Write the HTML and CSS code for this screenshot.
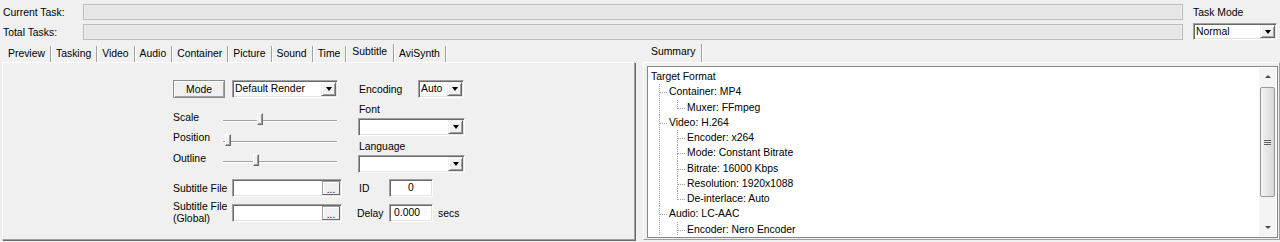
FILE: index.html
```html
<!DOCTYPE html>
<html>
<head>
  <title>Encoder Queue</title>
  <link rel="stylesheet" href="styles.css">
</head>
<body>
  <div class="status">
    <div class="status-bars">
      <div class="status-row">
        <span class="status-label">Current Task:</span>
        <div class="progress"></div>
      </div>
      <div class="status-row">
        <span class="status-label">Total Tasks:</span>
        <div class="progress"></div>
      </div>
    </div>
    <div class="task-mode">
      <span class="task-mode-label">Task Mode</span>
      <div class="combo combo-mode"><span class="combo-text">Normal</span><span class="drop"></span></div>
    </div>
  </div>

  <div class="main">
    <div class="left">
      <div class="tabs">
        <span class="tab">Preview</span>
        <span class="tab">Tasking</span>
        <span class="tab">Video</span>
        <span class="tab">Audio</span>
        <span class="tab">Container</span>
        <span class="tab">Picture</span>
        <span class="tab">Sound</span>
        <span class="tab">Time</span>
        <span class="tab active">Subtitle</span>
        <span class="tab">AviSynth</span>
      </div>
      <div class="panel">
        <div class="form">
          <div class="col col-a">
            <div class="row row-mode">
              <span class="btn btn-mode">Mode</span>
              <div class="combo combo-render"><span class="combo-text">Default Render</span><span class="drop"></span></div>
            </div>
            <div class="row slider-row">
              <span class="slider-label">Scale</span>
              <div class="slider"><div class="track"></div><div class="thumb" style="left: 34px"></div></div>
            </div>
            <div class="row slider-row">
              <span class="slider-label">Position</span>
              <div class="slider"><div class="track"></div><div class="thumb" style="left: 2px"></div></div>
            </div>
            <div class="row slider-row">
              <span class="slider-label">Outline</span>
              <div class="slider"><div class="track"></div><div class="thumb" style="left: 30px"></div></div>
            </div>
            <div class="row file-row first-file">
              <span class="file-label">Subtitle File</span>
              <div class="input file-input"><span class="input-text"></span><span class="browse">...</span></div>
            </div>
            <div class="row file-row">
              <span class="file-label two-line">Subtitle File<br>(Global)</span>
              <div class="input file-input"><span class="input-text"></span><span class="browse">...</span></div>
            </div>
          </div>

          <div class="col col-b">
            <div class="row row-encoding">
              <span class="enc-label">Encoding</span>
              <div class="combo combo-auto"><span class="combo-text">Auto</span><span class="drop"></span></div>
            </div>
            <span class="field-label label-font">Font</span>
            <div class="combo combo-wide"><span class="combo-text"></span><span class="drop"></span></div>
            <span class="field-label label-lang">Language</span>
            <div class="combo combo-wide"><span class="combo-text"></span><span class="drop"></span></div>
            <div class="row num-row row-id">
              <span class="num-label id-label">ID</span>
              <div class="input num-input centered">0</div>
            </div>
            <div class="row num-row">
              <span class="num-label">Delay</span>
              <div class="input num-input">0.000</div>
              <span class="unit">secs</span>
            </div>
          </div>
        </div>
      </div>
    </div>

    <div class="right">
      <div class="tabs tabs-right">
        <span class="tab active">Summary</span>
      </div>
      <div class="page">
        <div class="tree-box">
          <div class="tree-scroll">
            <ul class="tree">
              <li><span class="node">Target Format</span>
                <ul>
                  <li><span class="node">Container: MP4</span>
                    <ul>
                      <li><span class="node">Muxer: FFmpeg</span></li>
                    </ul>
                  </li>
                  <li><span class="node">Video: H.264</span>
                    <ul>
                      <li><span class="node">Encoder: x264</span></li>
                      <li><span class="node">Mode: Constant Bitrate</span></li>
                      <li><span class="node">Bitrate: 16000 Kbps</span></li>
                      <li><span class="node">Resolution: 1920x1088</span></li>
                      <li><span class="node">De-interlace: Auto</span></li>
                    </ul>
                  </li>
                  <!-- list continues below the visible area -->
                  <li class="cont"><span class="node">Audio: LC-AAC</span>
                    <ul>
                      <li class="cont"><span class="node">Encoder: Nero Encoder</span></li>
                    </ul>
                  </li>
                </ul>
              </li>
            </ul>
          </div>
          <div class="scrollbar">
            <div class="sb-btn sb-up"></div>
            <div class="sb-track">
              <div class="sb-thumb"><span></span><span></span><span></span></div>
            </div>
            <div class="sb-btn sb-down"></div>
          </div>
        </div>
      </div>
    </div>
  </div>
</body>
</html>
```

FILE: styles.css
```css
* {
  margin: 0;
  padding: 0;
  box-sizing: border-box;
}

html, body {
  width: 100%;
  height: 100%;
  overflow: hidden;
}

body {
  font-family: 'Liberation Sans', Arial, sans-serif;
  font-size: 10.4px;
  color: #000000;
  background-color: #f0f0f0;
}

/* Top status area */
.status {
  display: flex;
  padding: 4px 3px 0 3px;
}

.status-bars {
  flex: 1;
  display: flex;
  flex-direction: column;
  gap: 4px;
}

.status-row {
  display: flex;
  align-items: center;
  height: 16px;
}

.status-label {
  width: 80px;
}

.progress {
  flex: 1;
  height: 16px;
  border: 1px solid #bcbcbc;
  background: #e6e6e6;
  box-shadow: inset 0 0 0 1px #ececec;
}

.task-mode {
  width: 84px;
  margin-left: 10px;
  padding-top: 2px;
}

.task-mode-label {
  display: block;
  line-height: 14px;
}

.combo-mode {
  margin-top: 3px;
}

/* Shared controls */
.combo,
.input {
  display: flex;
  height: 18px;
  background: #ffffff;
  border: 1px solid;
  border-color: #a0a0a0 #ffffff #ffffff #a0a0a0;
  box-shadow: inset 1px 1px 0 #696969, inset -1px -1px 0 #e3e3e3;
}

.combo-mode {
  height: 17px;
}

.combo-text {
  flex: 1;
  padding-left: 2px;
  line-height: 16px;
  white-space: nowrap;
  overflow: hidden;
}

.drop {
  width: 15px;
  margin: 1px 1px 1px 0;
  background: #f0f0f0;
  border: 1px solid;
  border-color: #f0f0f0 #696969 #696969 #f0f0f0;
  box-shadow: inset 1px 1px 0 #ffffff, inset -1px -1px 0 #a0a0a0;
  display: flex;
  align-items: center;
  justify-content: center;
}

.drop::after {
  content: '';
  border-left: 3.5px solid transparent;
  border-right: 3.5px solid transparent;
  border-top: 4px solid #000000;
}

.btn {
  display: flex;
  align-items: center;
  justify-content: center;
  background: #f0f0f0;
  border: 1px solid #8c8c8c;
  box-shadow: inset 1px 1px 0 #ffffff, inset -1px -1px 0 #a0a0a0;
}

/* Tabs */
.tabs {
  display: flex;
  height: 18px;
  padding-left: 1px;
  align-items: flex-end;
}

.tab {
  height: 16px;
  padding: 0 5px;
  line-height: 15px;
  border-right: 1px solid #a0a0a0;
  box-shadow: 1px 0 0 #ffffff;
  white-space: nowrap;
}

.tab.active {
  height: 18px;
  line-height: 16px;
  padding: 0 6px;
}

/* Left panel */
.main {
  display: flex;
  margin-top: 4px;
}

.left {
  width: 633px;
  margin-left: 2px;
}

.panel {
  height: 178px;
  border-top: 1px solid #ffffff;
  border-left: 1px solid #ffffff;
  border-right: 1px solid #a0a0a0;
  border-bottom: 1px solid #a0a0a0;
  box-shadow: 1px 1px 0 #696969;
}

.form {
  display: flex;
  padding: 17px 0 0 170px;
}

.col-a {
  width: 170px;
  display: flex;
  flex-direction: column;
}

.row {
  display: flex;
  align-items: center;
}

.row-mode {
  height: 18px;
}

.btn-mode {
  width: 52px;
  height: 18px;
  margin-right: 7px;
}

.combo-render {
  width: 106px;
}

.slider-row {
  height: 20.5px;
}

.row-mode + .slider-row {
  margin-top: 9px;
}

.slider-label {
  width: 50px;
}

.slider {
  position: relative;
  width: 114px;
  height: 100%;
}

.track {
  position: absolute;
  left: 0;
  right: 0;
  top: 13px;
  height: 2px;
  border-top: 1px solid #a0a0a0;
  border-bottom: 1px solid #ffffff;
}

.thumb {
  position: absolute;
  top: 6px;
  width: 6px;
  height: 12px;
  background: #f0f0f0;
  border: 1px solid;
  border-color: #ffffff #696969 #696969 #ffffff;
  box-shadow: inset -1px -1px 0 #a0a0a0;
}

.file-row {
  height: 18px;
  margin-top: 7px;
}

.first-file {
  margin-top: 10.5px;
}

.file-label {
  width: 59px;
  white-space: nowrap;
}

.two-line {
  line-height: 12px;
}

.file-input {
  width: 110px;
}

.input-text {
  flex: 1;
}

.browse {
  width: 18px;
  margin: 1px 1px 1px 0;
  background: #f0f0f0;
  border: 1px solid;
  border-color: #a0a0a0 #696969 #696969 #a0a0a0;
  box-shadow: inset 1px 1px 0 #ffffff;
  text-align: center;
  line-height: 16px;
  font-size: 10px;
}

.col-b {
  width: 108px;
  margin-left: 14px;
  display: flex;
  flex-direction: column;
}

.row-encoding {
  height: 18px;
}

.enc-label {
  width: 61px;
  padding-left: 2px;
}

.combo-auto {
  width: 46px;
}

.field-label {
  padding-left: 2px;
  line-height: 13px;
}

.label-font {
  margin-top: 5px;
}

.label-lang {
  margin-top: 4px;
}

.combo-wide {
  width: 107px;
  margin-left: 1px;
  margin-top: 2px;
}

.num-row {
  height: 18px;
  margin-top: 7px;
}

.row-id {
  margin-top: 6px;
}

.num-label {
  width: 32px;
}

.id-label {
  padding-left: 2px;
}

.num-input {
  width: 44px;
  padding-left: 4px;
  line-height: 16px;
}

.num-input.centered {
  justify-content: center;
  padding-left: 0;
}

.unit {
  margin-left: 5px;
}

/* Right panel */
.right {
  flex: 1;
  margin-left: 8px;
}

.tabs-right {
  padding-left: 2px;
}

.page {
  height: 178px;
  padding: 3px 1px 1px 3px;
  border-top: 1px solid #ffffff;
  border-left: 1px solid #ffffff;
  border-right: 1px solid #a0a0a0;
  border-bottom: 1px solid #a0a0a0;
  display: flex;
}

.tree-box {
  flex: 1;
  display: flex;
  background: #ffffff;
  border: 1px solid #828790;
  padding: 1px;
}

.tree-scroll {
  flex: 1;
  overflow: hidden;
  padding: 1px 0 0 2px;
}

.tree,
.tree ul {
  list-style: none;
}

.tree ul {
  padding-left: 18px;
}

.tree li {
  position: relative;
}

.node {
  display: block;
  height: 15.25px;
  line-height: 15.25px;
  white-space: nowrap;
}

/* Dotted tree connectors */
.tree ul > li::before {
  content: '';
  position: absolute;
  left: -10px;
  top: 0;
  width: 7px;
  height: 8px;
  border-left: 1px dotted #a0a0a0;
  border-bottom: 1px dotted #a0a0a0;
}

.tree ul > li:not(:last-child)::after,
.tree ul > li.cont::after {
  content: '';
  position: absolute;
  left: -10px;
  top: 8px;
  bottom: 0;
  border-left: 1px dotted #a0a0a0;
}

.tree ul > li.cont::after {
  bottom: -30px;
}

.scrollbar {
  width: 17px;
  display: flex;
  flex-direction: column;
  background: #f4f4f4;
}

.sb-btn {
  height: 17px;
  display: flex;
  align-items: center;
  justify-content: center;
}

.sb-up::after {
  content: '';
  border-left: 3px solid transparent;
  border-right: 3px solid transparent;
  border-bottom: 3px solid #4d4d4d;
}

.sb-down::after {
  content: '';
  border-left: 3px solid transparent;
  border-right: 3px solid transparent;
  border-top: 3px solid #4d4d4d;
}

.sb-track {
  flex: 1;
}

.sb-thumb {
  margin: 2px 1px 0 1px;
  height: 110px;
  border: 1px solid #9a9a9a;
  border-radius: 2px;
  background: linear-gradient(90deg, #f3f3f3 0%, #e6e6e6 50%, #d8d8d8 100%);
  display: flex;
  flex-direction: column;
  align-items: center;
  justify-content: center;
  gap: 1px;
}

.sb-thumb span {
  width: 7px;
  height: 1px;
  background: #606060;
}
```
